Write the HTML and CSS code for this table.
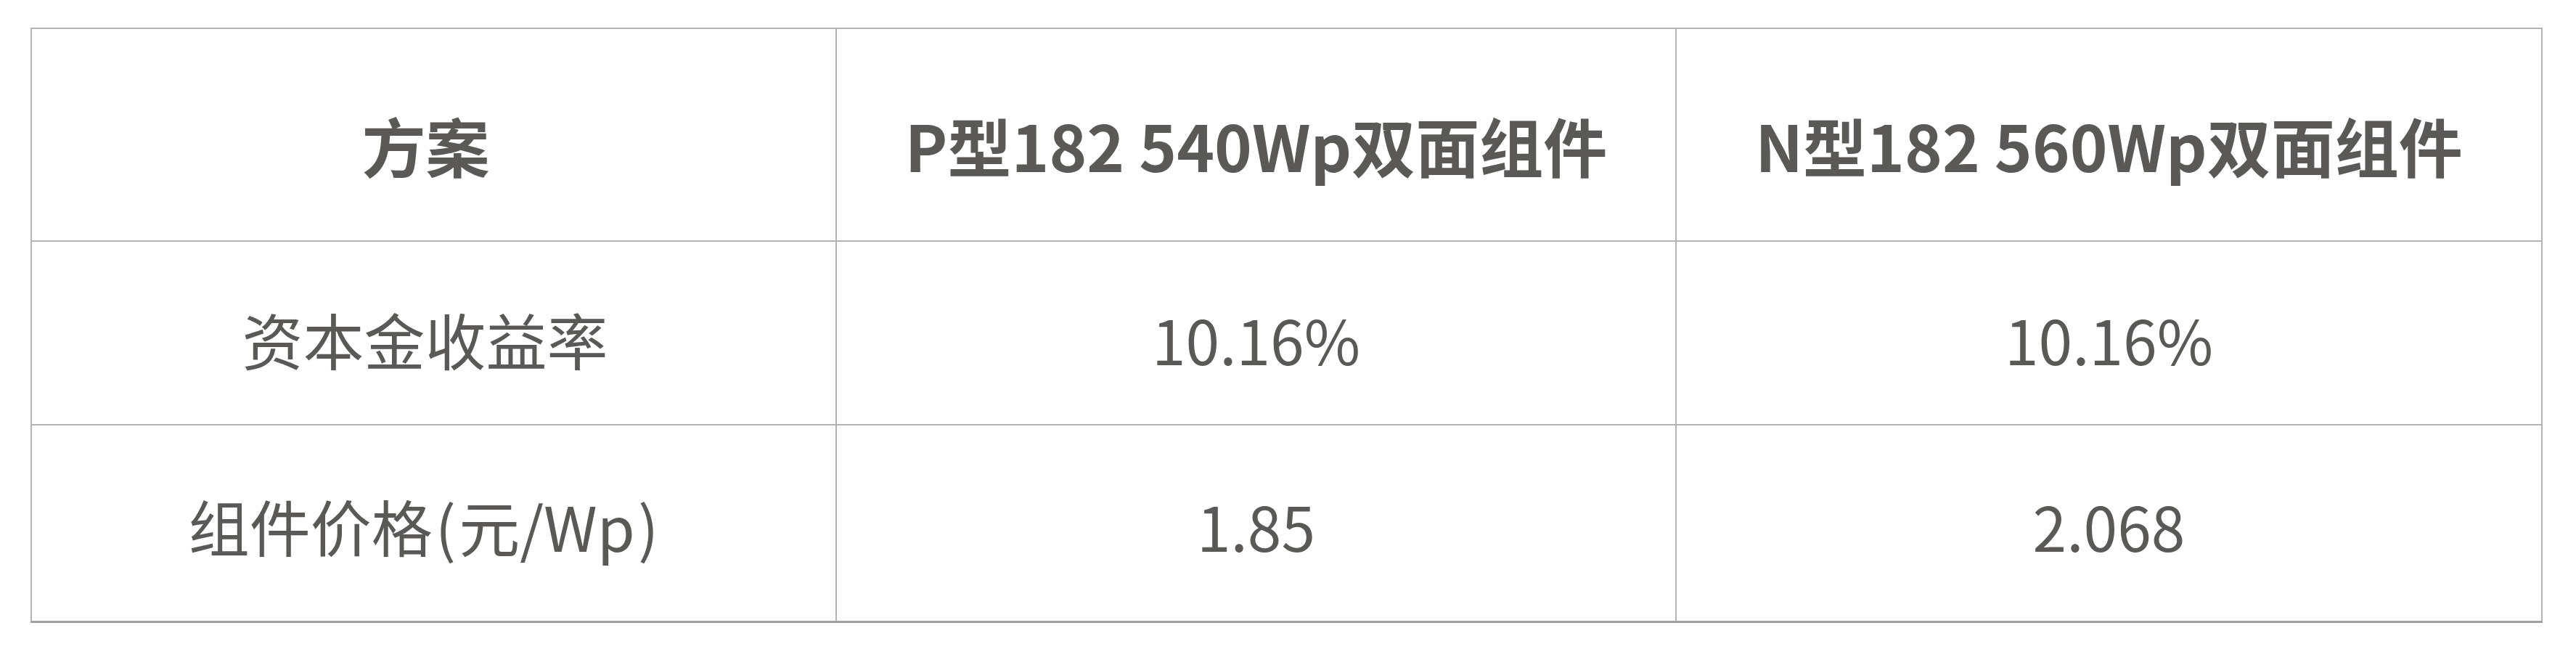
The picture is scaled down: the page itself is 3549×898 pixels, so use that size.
FILE: index.html
```html
<!DOCTYPE html>
<html lang="zh-CN">
<head>
<meta charset="utf-8">
<title>方案对比</title>
<link rel="stylesheet" href="styles.css">
</head>
<body>
<div class="wrap">
  <table class="cmp">
    <colgroup>
      <col class="c1">
      <col class="c2">
      <col class="c3">
    </colgroup>
    <thead>
      <tr class="r-head">
        <th>方案</th>
        <th>P型182 540Wp双面组件</th>
        <th>N型182 560Wp双面组件</th>
      </tr>
    </thead>
    <tbody>
      <tr class="r-a">
        <td>资本金收益率</td>
        <td>10.16%</td>
        <td>10.16%</td>
      </tr>
      <tr class="r-b">
        <td>组件价格<span class="paren">(</span>元/Wp<span class="paren">)</span></td>
        <td>1.85</td>
        <td>2.068</td>
      </tr>
    </tbody>
  </table>
</div>
</body>
</html>
```
FILE: styles.css
```css
html, body {
  margin: 0;
  padding: 0;
  background: #ffffff;
}
.wrap {
  padding: 38px 0 0 42px;
}
.cmp {
  border-collapse: collapse;
  table-layout: fixed;
  width: 3459px;
  font-family: "Noto Sans CJK SC", "Noto Sans", sans-serif;
  font-size: 84px;
  color: #5a5957;
  line-height: 100px;
}
.c1 { width: 1109px; }
.c2 { width: 1157px; }
.c3 { width: 1193px; }
.cmp th, .cmp td {
  border: 2px solid #b3b3b3;
  text-align: center;
  vertical-align: middle;
  padding: 0;
}
.cmp th {
  font-weight: 700;
  font-size: 88px;
}
.cmp tbody tr:last-child td {
  border-bottom: 3px solid #a0a0a0;
}
.r-head th {
  height: 265px;
  padding-top: 26px;
}
.r-head th:first-child {
  padding-right: 22px;
}
.r-a td {
  height: 234px;
  padding-top: 17px;
}
.r-b td {
  height: 263px;
  padding-top: 6px;
}
.r-a td:first-child, .r-b td:first-child {
  padding-right: 24px;
}
.paren {
  margin: 0 4px;
}
```
